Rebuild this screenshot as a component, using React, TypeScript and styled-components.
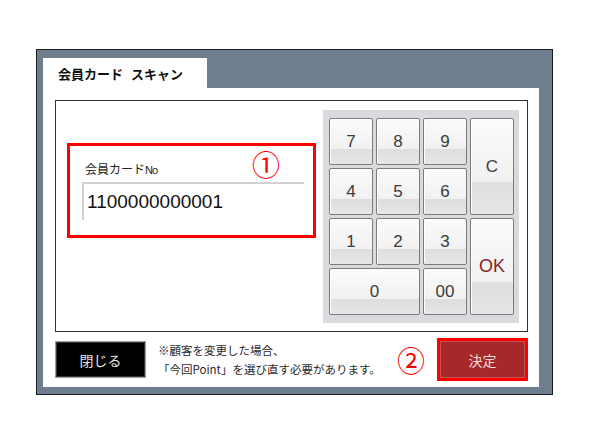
import * as React from 'react';
import styled, { createGlobalStyle } from 'styled-components';

const GlobalStyle = createGlobalStyle`
  body {
    margin: 0;
    background: #fff;
    font-family: 'Noto Sans CJK JP', 'Liberation Sans', sans-serif;
  }
`;

const JP = `'Noto Sans CJK JP', 'Liberation Sans', sans-serif`;
const NUM = `'Liberation Sans', Arial, sans-serif`;

const KEYS = [
  { label: '7' },
  { label: '8' },
  { label: '9' },
  { label: 'C', tall: true },
  { label: '4' },
  { label: '5' },
  { label: '6' },
  { label: '1' },
  { label: '2' },
  { label: '3' },
  { label: 'OK', tall: true, accent: true },
  { label: '0', wide: true },
  { label: '00' },
];

export default function App() {
  const [cardNo, setCardNo] = React.useState('1100000000001');

  function press(key: string) {
    if (key === 'C') {
      setCardNo('');
    } else if (key !== 'OK') {
      setCardNo(cardNo + key);
    }
  }

  return (
    <Page>
      <GlobalStyle />
      <Frame>
        <Tab>
          会員カード<TabGap />スキャン
        </Tab>
        <Body>
          <Panel>
            <CardBox>
              <LabelRow>
                <Label>
                  会員カード<NoMark>No</NoMark>
                </Label>
                <Marker>①</Marker>
              </LabelRow>
              <CardInput>{cardNo}</CardInput>
            </CardBox>
            <Keypad>
              {KEYS.map(k => (
                <Key
                  key={k.label}
                  $tall={k.tall}
                  $wide={k.wide}
                  $accent={k.accent}
                  onClick={() => press(k.label)}
                >
                  {k.label}
                </Key>
              ))}
            </Keypad>
          </Panel>
          <Footer>
            <CloseButton>閉じる</CloseButton>
            <Note>
              ※顧客を変更した場合、
              <br />
              「今回Point」を選び直す必要があります。
            </Note>
            <Marker $footer>②</Marker>
            <Highlight>
              <ConfirmButton>決定</ConfirmButton>
            </Highlight>
          </Footer>
        </Body>
      </Frame>
    </Page>
  );
}

const Page = styled.div`
  padding: 49px 0 0 36px;
`;

const Frame = styled.div`
  box-sizing: border-box;
  width: 517px;
  height: 346px;
  border: 1px solid #1c1c1c;
  background: #6e7e8e;
  padding: 8px 13px 7px 6px;
  display: flex;
  flex-direction: column;
`;

const Tab = styled.div`
  box-sizing: border-box;
  width: 164px;
  height: 30px;
  background: #fff;
  display: flex;
  align-items: center;
  padding-left: 15px;
  font-family: ${JP};
  font-size: 13px;
  font-weight: 700;
  color: #111;
`;

const TabGap = styled.span`
  display: inline-block;
  width: 8px;
`;

const Body = styled.div`
  flex: 1;
  background: #fff;
  padding: 12px 11px 0 12px;
  display: flex;
  flex-direction: column;
`;

const Panel = styled.div`
  box-sizing: border-box;
  height: 232px;
  border: 1px solid #333;
  display: flex;
  align-items: flex-start;
`;

const CardBox = styled.div`
  box-sizing: border-box;
  width: 249px;
  height: 95px;
  margin: 42px 0 0 11px;
  border: 3px solid #ff0000;
  padding: 4px 9px 0 12px;
`;

const LabelRow = styled.div`
  height: 28px;
  display: flex;
  align-items: flex-end;
  justify-content: space-between;
`;

const Label = styled.span`
  margin-left: 3px;
  font-family: ${JP};
  font-size: 12px;
  line-height: 16px;
  color: #222;
`;

const NoMark = styled.span`
  font-family: ${NUM};
  font-size: 11px;
  letter-spacing: -1px;
`;

const Marker = styled.span<{ $footer?: boolean }>`
  font-family: ${JP};
  font-size: 28px;
  line-height: 28px;
  color: #ff0000;
  margin-right: ${p => (p.$footer ? '12px' : '24px')};
  margin-left: ${p => (p.$footer ? 'auto' : '0')};
`;

const CardInput = styled.div`
  box-sizing: border-box;
  width: 222px;
  height: 38px;
  margin-top: 4px;
  border-top: 2px solid #d2d2d2;
  border-left: 2px solid #d2d2d2;
  padding-left: 3px;
  display: flex;
  align-items: center;
  font-family: ${NUM};
  font-size: 19px;
  color: #111;
`;

const Keypad = styled.div`
  box-sizing: border-box;
  width: 196px;
  height: 213px;
  margin: 9px 8px 0 auto;
  padding: 8px 5px 8px 6px;
  background: #d9d9de;
  display: grid;
  grid-template-columns: repeat(4, 44px);
  grid-template-rows: repeat(4, 47px);
  gap: 3px;
`;

const Key = styled.button<{ $tall?: boolean; $wide?: boolean; $accent?: boolean }>`
  grid-row: ${p => (p.$tall ? 'span 2' : 'auto')};
  grid-column: ${p => (p.$wide ? 'span 2' : 'auto')};
  box-sizing: border-box;
  margin: 0;
  padding: 0;
  border: 1px solid #7c7c7c;
  border-radius: 2px;
  background: linear-gradient(
    #fbfbfb 0%,
    #f1f1f1 66%,
    #dedede 67%,
    #e6e6e6 100%
  );
  box-shadow: inset 1px 1px 0 #fff;
  font-family: ${NUM};
  font-size: ${p => (p.$accent ? '18px' : '17px')};
  color: ${p => (p.$accent ? '#8a2228' : '#3c3c3c')};
  cursor: pointer;
`;

const Footer = styled.div`
  flex: 1;
  display: flex;
  align-items: center;
`;

const CloseButton = styled.button`
  box-sizing: border-box;
  width: 91px;
  height: 37px;
  margin: 0;
  border: 1px solid #9a9a9a;
  box-shadow: inset 0 0 0 1px #3a3a3a;
  background: #000;
  color: #e4e4e4;
  font-family: ${JP};
  font-size: 14px;
  cursor: pointer;
`;

const Note = styled.div`
  margin-left: 12px;
  font-family: ${JP};
  font-size: 11.5px;
  line-height: 19px;
  color: #2a2a2a;
`;

const Highlight = styled.div`
  border: 3px solid #ff0000;
  display: flex;
`;

const ConfirmButton = styled.button`
  box-sizing: border-box;
  width: 85px;
  height: 37px;
  margin: 0;
  border: 1px solid #c45252;
  background: #a6282b;
  color: #f2dcdc;
  font-family: ${JP};
  font-size: 14px;
  cursor: pointer;
`;
